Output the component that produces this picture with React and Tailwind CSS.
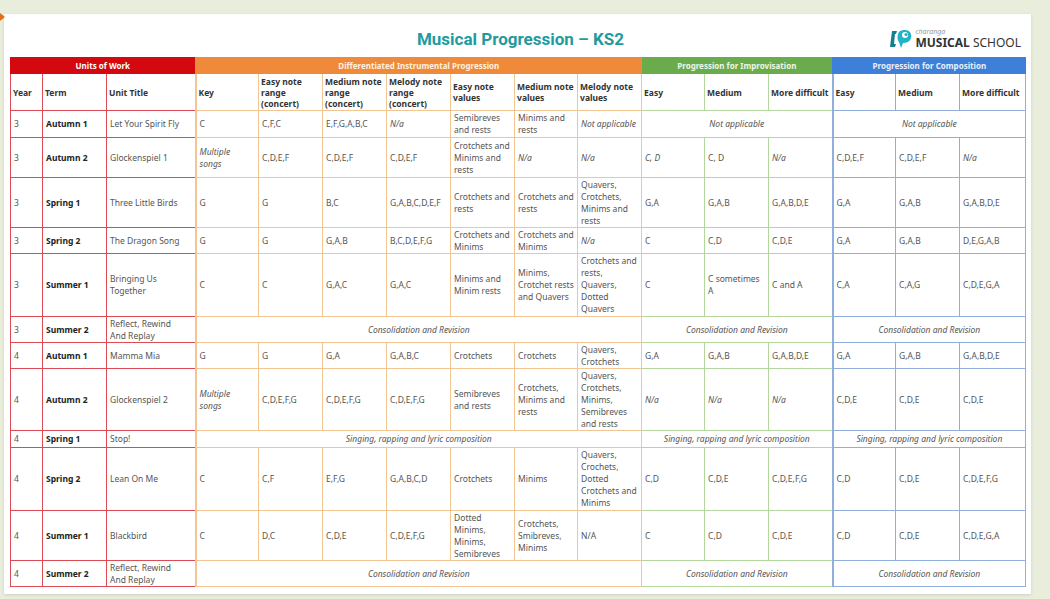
import React from "react";

const it = (t) => ({ t, i: true });

const rows = [
  { h: 27, y: "3", term: "Autumn 1", title: "Let Your Spirit Fly", cells: ["C", "C,F,C", "E,F,G,A,B,C", it("N/a"), "Semibreves and rests", "Minims and rests", it("Not applicable")], imp: it("Not applicable"), comp: it("Not applicable") },
  { h: 40, y: "3", term: "Autumn 2", title: "Glockenspiel 1", cells: [it("Multiple\nsongs"), "C,D,E,F", "C,D,E,F", "C,D,E,F", "Crotchets and Minims and rests", it("N/a"), it("N/a"), it("C, D"), "C, D", it("N/a"), "C,D,E,F", "C,D,E,F", it("N/a")] },
  { h: 50, y: "3", term: "Spring 1", title: "Three Little Birds", cells: ["G", "G", "B,C", "G,A,B,C,D,E,F", "Crotchets and rests", "Crotchets and rests", "Quavers, Crotchets, Minims and rests", "G,A", "G,A,B", "G,A,B,D,E", "G,A", "G,A,B", "G,A,B,D,E"] },
  { h: 26, y: "3", term: "Spring 2", title: "The Dragon Song", cells: ["G", "G", "G,A,B", "B,C,D,E,F,G", "Crotchets and Minims", "Crotchets and Minims", it("N/a"), "C", "C,D", "C,D,E", "G,A", "G,A,B", "D,E,G,A,B"] },
  { h: 63, y: "3", term: "Summer 1", title: "Bringing Us\nTogether", cells: ["C", "C", "G,A,C", "G,A,C", "Minims and Minim rests", "Minims, Crotchet\u00a0rests and Quavers", "Crotchets and rests, Quavers, Dotted Quavers", "C", "C sometimes\nA", "C and A", "C,A", "C,A,G", "C,D,E,G,A"] },
  { h: 26, y: "3", term: "Summer 2", title: "Reflect, Rewind\nAnd Replay", span: "Consolidation and Revision" },
  { h: 26, y: "4", term: "Autumn 1", title: "Mamma Mia", cells: ["G", "G", "G,A", "G,A,B,C", "Crotchets", "Crotchets", "Quavers, Crotchets", "G,A", "G,A,B", "G,A,B,D,E", "G,A", "G,A,B", "G,A,B,D,E"] },
  { h: 62, y: "4", term: "Autumn 2", title: "Glockenspiel 2", cells: [it("Multiple\nsongs"), "C,D,E,F,G", "C,D,E,F,G", "C,D,E,F,G", "Semibreves and rests", "Crotchets, Minims and rests", "Quavers, Crotchets, Minims, Semibreves and rests", it("N/a"), it("N/a"), it("N/a"), "C,D,E", "C,D,E", "C,D,E"] },
  { h: 17, y: "4", term: "Spring 1", title: "Stop!", span: "Singing, rapping and lyric composition" },
  { h: 63, y: "4", term: "Spring 2", title: "Lean On Me", cells: ["C", "C,F", "E,F,G", "G,A,B,C,D", "Crotchets", "Minims", "Quavers, Crochets, Dotted Crotchets and Minims", "C,D", "C,D,E", "C,D,E,F,G", "C,D", "C,D,E", "C,D,E,F,G"] },
  { h: 50, y: "4", term: "Summer 1", title: "Blackbird", cells: ["C", "D,C", "C,D,E", "C,D,E,F,G", "Dotted Minims, Minims, Semibreves", "Crotchets, Smibreves, Minims", "N/A", "C", "C,D", "C,D,E", "C,D", "C,D,E", "C,D,E,G,A"] },
  { h: 26, y: "4", term: "Summer 2", title: "Reflect, Rewind\nAnd Replay", span: "Consolidation and Revision" },
];

const widths = [32, 64, 89, 63, 64, 64, 64, 64, 63, 64, 63, 64, 64, 63, 64, 66];

const heads = [
  "Year",
  "Term",
  "Unit Title",
  "Key",
  "Easy note\nrange\n(concert)",
  "Medium note\nrange\n(concert)",
  "Melody note\nrange\n(concert)",
  "Easy note\nvalues",
  "Medium note\nvalues",
  "Melody note\nvalues",
  "Easy",
  "Medium",
  "More difficult",
  "Easy",
  "Medium",
  "More difficult",
];

const border = {
  u: "border border-[#dc4b53]",
  o: "border border-[#f2c594]",
  g: "border border-[#b3d69d]",
  b: "border border-[#8fb0df]",
};

const sec = (c) => (c < 3 ? "u" : c < 10 ? "o" : c < 13 ? "g" : "b");

const edge = (c) => {
  if (c === 3) return " border-l-2";
  if (c === 13) return " border-l-2";
  return "";
};

const Td = ({ c, v, span, className = "" }) => {
  const italic = v && typeof v === "object";
  const text = italic ? v.t : v;
  return (
    <td
      colSpan={span}
      className={`${border[sec(c)]}${edge(c)} px-[3px] py-0 align-middle whitespace-pre-line text-[8.5px] leading-[12px] text-[#555] ${italic ? "italic" : ""} ${className}`}
    >
      {text}
    </td>
  );
};

const Logo = () => (
  <div className="flex items-center gap-[3px]">
    <svg width="22" height="20" viewBox="0 0 22 20">
      <path d="M2 2 L7 2 L6 5 L5 5 L4 15 L6 15 L5 18 L0 18 Z" fill="#167f8e" />
      <path d="M15 1 C20 1 22 5 21 9 C20 13 16 14 13 14 L11 19 L9 13 C7 11 7 6 9 3 C10.5 1.5 12.5 1 15 1 Z" fill="#22b3c8" />
      <circle cx="15" cy="6" r="3" fill="#ffffff" />
      <circle cx="16" cy="5.5" r="1.6" fill="#22b3c8" />
    </svg>
    <div className="flex flex-col">
      <span className="text-[7px] italic text-[#9a9a9a] leading-[8px]">charanga</span>
      <span className="text-[12px] text-[#333] leading-[13px]">
        <span className="font-bold">MUSICAL</span> SCHOOL
      </span>
    </div>
  </div>
);

export default function App() {
  return (
    <div className="w-[1050px] h-[599px] bg-[#e9eddc] pt-[14px] pl-[4px] font-['Noto_Sans',sans-serif] relative overflow-hidden">
      <div className="absolute left-0 top-[13px] w-[5px] h-[8px] bg-[#e0701e] [clip-path:polygon(0_0,100%_50%,0_100%)]" />
      <div className="w-[1027px] h-[580px] bg-white shadow-[0_1px_3px_rgba(0,0,0,0.12)] flex flex-col px-[6px]">
        <div className="h-[43px] flex items-end pb-[5px] relative">
          <div className="flex-1 text-center text-[17px] font-bold text-[#1f9ba0] pl-[6px] font-[Roboto,sans-serif]">
            Musical Progression – KS2
          </div>
          <div className="absolute right-[4px] bottom-[8px]">
            <Logo />
          </div>
        </div>
        <table className="table-fixed border-collapse w-[1015px]">
          <colgroup>
            {widths.map((w, i) => (
              <col key={i} style={{ width: w }} />
            ))}
          </colgroup>
          <thead>
            <tr className="h-[16px] text-[8px] font-bold leading-[10px]">
              <th colSpan={3} className="bg-[#d4080f] text-white border border-[#d4080f]">Units of Work</th>
              <th colSpan={7} className="bg-[#ee8a39] text-[#fff1e2] border border-[#ee8a39] border-l-2 border-l-[#ee8a39]">Differentiated Instrumental Progression</th>
              <th colSpan={3} className="bg-[#6aab4b] text-[#eef7e8] border border-[#6aab4b]">Progression for Improvisation</th>
              <th colSpan={3} className="bg-[#3d7fd9] text-[#e8f0fb] border border-[#3d7fd9] border-l-2 border-l-[#3d7fd9]">Progression for Composition</th>
            </tr>
            <tr className="h-[37px]">
              {heads.map((h, c) => (
                <th
                  key={c}
                  className={`${border[sec(c)]}${edge(c)} px-[2px] py-0 align-middle text-left whitespace-pre text-[8.5px] leading-[11px] font-bold text-[#333]`}
                >
                  {h}
                </th>
              ))}
            </tr>
          </thead>
          <tbody>
            {rows.map((r, ri) => (
              <tr key={ri} style={{ height: r.h }}>
                <Td c={0} v={r.y} />
                <Td c={1} v={r.term} className="!font-bold !text-[#222]" />
                <Td c={2} v={r.title} />
                {r.span ? (
                  <>
                    <Td c={3} span={7} v={it(r.span)} className="text-center" />
                    <Td c={10} span={3} v={it(r.span)} className="text-center" />
                    <Td c={13} span={3} v={it(r.span)} className="text-center" />
                  </>
                ) : r.imp ? (
                  <>
                    {r.cells.map((v, k) => (
                      <Td key={k} c={3 + k} v={v} />
                    ))}
                    <Td c={10} span={3} v={r.imp} className="text-center" />
                    <Td c={13} span={3} v={r.comp} className="text-center" />
                  </>
                ) : (
                  r.cells.map((v, k) => <Td key={k} c={3 + k} v={v} />)
                )}
              </tr>
            ))}
          </tbody>
        </table>
      </div>
    </div>
  );
}
